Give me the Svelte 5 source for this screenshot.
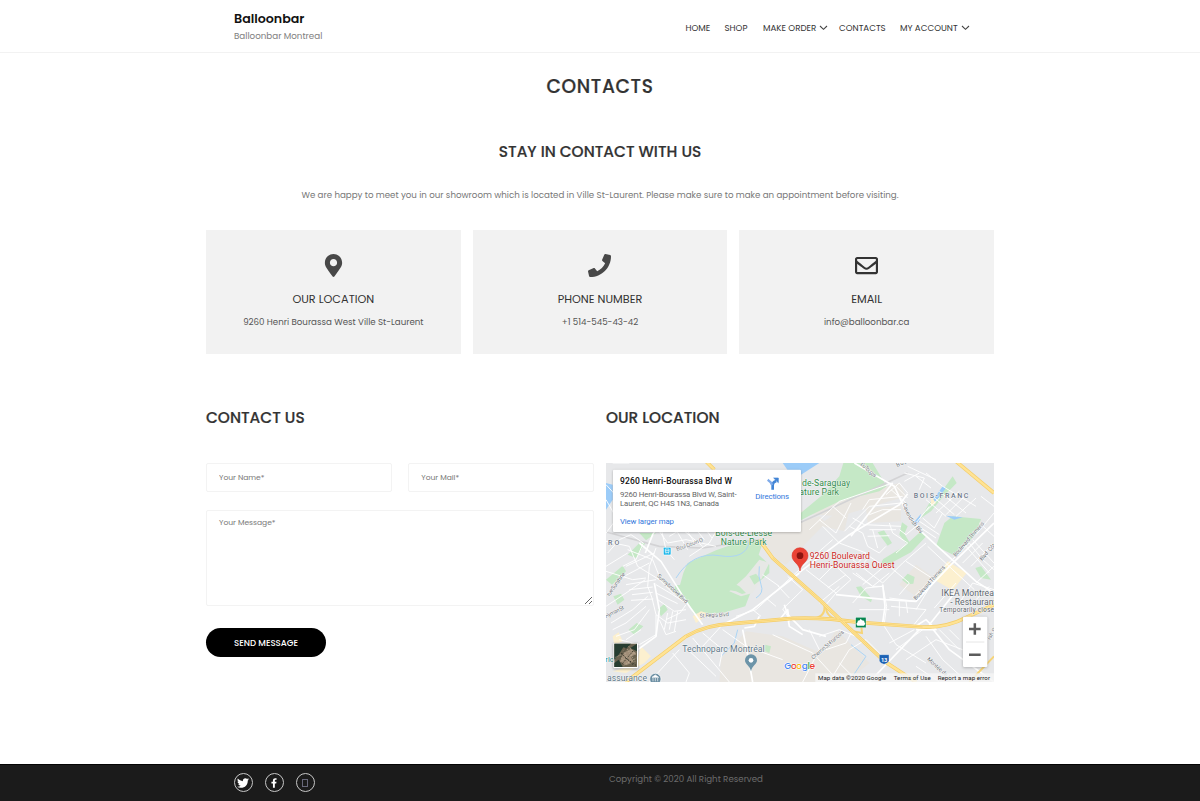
<script>
  const nav = [
    { label: 'HOME', w: 25 },
    { label: 'SHOP', w: 24 },
    { label: 'MAKE ORDER', w: 65, sub: true },
    { label: 'CONTACTS', w: 47 },
    { label: 'MY ACCOUNT', w: 70, sub: true }
  ];
  const cards = [
    { title: 'OUR LOCATION', text: '9260 Henri Bourassa West Ville St-Laurent', icon: 'pin' },
    { title: 'PHONE NUMBER', text: '+1 514-545-43-42', icon: 'phone' },
    { title: 'EMAIL', text: 'info@balloonbar.ca', icon: 'mail' }
  ];
  const twitter = 'M459.37 151.716c.325 4.548.325 9.097.325 13.645 0 138.72-105.583 298.558-298.558 298.558-59.452 0-114.68-17.219-161.137-47.106 8.447.974 16.568 1.299 25.34 1.299 49.055 0 94.213-16.568 130.274-44.832-46.132-.975-84.792-31.188-98.112-72.772 6.498.974 12.995 1.624 19.818 1.624 9.421 0 18.843-1.3 27.614-3.573-48.081-9.747-84.143-51.98-84.143-102.985v-1.299c13.969 7.797 30.214 12.67 47.431 13.319-28.264-18.843-46.781-51.005-46.781-87.391 0-19.492 5.197-37.36 14.294-52.954 51.655 63.675 129.3 105.258 216.365 109.807-1.624-7.797-2.599-15.918-2.599-24.04 0-57.828 46.782-104.934 104.934-104.934 30.213 0 57.502 12.67 76.67 33.137 23.715-4.548 46.456-13.32 66.599-25.34-7.798 24.366-24.366 44.833-46.132 57.827 21.117-2.273 41.584-8.122 60.426-16.243-14.292 20.791-32.161 39.308-52.628 54.253z';
  const facebook = 'M279.14 288l14.22-92.66h-88.91v-60.13c0-25.35 12.42-50.06 52.24-50.06h40.42V6.26S260.43 0 225.36 0c-73.22 0-121.08 44.38-121.08 124.72v70.62H22.89V288h81.39v224h100.17V288z';

  const parks = [
    'M545 183L650 95 700 40 712 0 800 0 842 70 820 85 700 115 610 158 585 172Z',
    'M245 300L330 262 420 230 470 240 458 275 490 305 490 330 440 372 418 430 350 450 262 452 250 425 203 388 208 366 222 366 232 330Z',
    'M990 250L1015 180 1040 160 1125 168 1112 210 1050 280Z',
    'M832 288L895 250 945 205 962 218 915 268 840 308 825 300Z',
    'M815 208L834 202 858 240 845 248Z',
    'M888 178L905 190 895 212 912 240 904 246 880 215Z',
    'M945 165L970 120 1000 95 1040 40 1052 60 1008 105 975 145Z',
    'M90 285L118 240 100 240 65 275Z', 'M0 350L50 308 60 325 18 365Z',
    'M22 400L45 392 55 410 35 425Z', 'M155 440L175 422 185 440 165 460Z',
    'M68 500L92 480 112 490 85 515Z', 'M750 372L765 370 798 408 795 418 765 400Z',
    'M888 350L905 332 926 342 922 362 905 364Z', 'M478 545L495 550 490 570 478 565Z',
    'M1108 315L1125 310 1155 350 1125 345Z', 'M215 145L245 132 265 145 238 170Z',
    'M100 210L150 210 120 232Z'
  ];
  const blocks = [
    'M470 205L585 175 640 160 655 175 735 120 715 205 650 190 600 240 540 305 485 270Z',
    'M780 135L885 128 885 175 785 180Z', 'M560 150L880 60 900 100 700 160Z',
    'M345 585L420 505 530 520 690 590 640 657 340 657Z',
    'M880 365L930 305 985 345 930 400Z', 'M690 500L790 600 720 657 610 640Z'
  ];
  const minor = [
    'M0 65L60 130 0 210', 'M0 110L40 180 95 205', 'M20 0L70 0', 'M0 235L70 250 95 310 160 350 205 395',
    'M5 270L40 230 75 215 112 240 90 290 50 310', 'M65 260L140 290 160 340', 'M60 310L145 270', 'M45 345L130 300',
    'M150 255L130 310 125 370 138 405 150 455 150 520', 'M0 430L60 390 118 350', 'M15 480L80 440 125 400',
    'M60 365L150 350', 'M70 380L140 372', 'M78 395L140 388', 'M75 412L142 408', 'M150 365L200 395 240 420', 'M150 390L215 422',
    'M155 410L205 445 240 440', 'M150 455L185 480 240 470', 'M160 470L180 515 210 505', 'M185 450L175 500', 'M200 445L190 500', 'M215 445L205 505',
    'M240 425L222 450 180 470', 'M120 430L60 480 20 500', 'M130 440L85 500 30 520', 'M150 515L100 545 40 530', 'M60 530L105 500',
    'M190 220L240 190 300 160', 'M150 190L230 200 290 250', 'M210 200L245 260', 'M235 190L270 245', 'M255 180L295 230', 'M275 165L318 225',
    'M155 150L180 260 205 290', 'M160 205L185 240 240 230 330 250', 'M330 205L310 240 250 280', 'M0 310L65 270', 'M0 325L80 350 120 345',
    'M390 460L450 440 580 320', 'M440 440L465 460', 'M480 405L510 430', 'M515 368L550 405', 'M545 340L590 380 530 438 545 460', 'M470 335L520 370',
    'M590 310L640 265 680 230', 'M600 320L690 390 660 425', 'M640 350L680 310', 'M665 375L720 335', 'M690 390L735 350 690 310',
    'M640 420L700 370', 'M650 190L700 240 780 270 740 320', 'M610 200L700 115 860 60', 'M640 170L690 210 735 120', 'M680 130L720 165', 'M715 205L790 130 885 120',
    'M740 165L775 185 885 190', 'M730 190L770 210 785 250 820 270 840 250', 'M790 200L870 200', 'M785 220L850 218', 'M800 200L815 255', 'M850 180L860 210 905 240 870 270',
    'M880 200L900 215 930 190', 'M770 140L790 110 890 100', 'M790 155L830 140 885 140', 'M855 80L900 120', 'M870 70L905 105', 'M840 95L880 60 905 90',
    'M740 290L830 360', 'M765 310L790 280 835 310 770 365', 'M750 330L800 370 850 330', 'M830 360L890 300 960 240', 'M850 310L910 360 880 395', 'M900 295L985 350',
    'M920 405L990 335 1060 270', 'M965 250L1040 320 1105 380', 'M1040 290L1090 240 1130 290 1164 320', 'M1110 215L1164 150', 'M1100 230L1164 300', 'M1080 250L1150 330', 'M1120 180L1164 220',
    'M1070 300L1130 240', 'M1095 310L1164 240', 'M1110 360L1164 310', 'M985 350L930 440', 'M1050 360L985 435',
    'M960 110L1020 160', 'M980 100L1045 155', 'M1000 85L1080 150', 'M1010 70L1110 130', 'M960 145L1010 95', 'M990 150L1060 85', 'M1020 155L1080 95', 'M1050 160L1110 105', 'M950 165L985 195 1010 150',
    'M940 175L1000 215', 'M945 195L990 225', 'M970 130L930 180', 'M1125 100L1164 130', 'M830 365L842 430 835 480', 'M850 405L930 415', 'M855 430L960 440 920 490', 'M880 415L880 460', 'M900 415L905 450',
    'M740 420L780 375 830 370', 'M760 440L850 440', 'M740 330L800 370 830 370', 'M610 500L640 560 590 657', 'M500 515L620 570 700 657', 'M230 545L330 640', 'M260 525L370 657', 'M290 510L350 560 340 610',
    'M350 500L420 550 530 590', 'M200 570L250 630 240 657', 'M220 560L130 657', 'M345 490L290 550', 'M680 640L730 560 780 530 840 590', 'M700 600L750 650', 'M660 560L720 540 740 500', 'M640 520L700 500 750 520',
    'M835 490L870 545 960 600', 'M850 540L925 500', 'M870 560L950 500', 'M900 590L990 530 1070 560', 'M930 610L1000 657', 'M1000 500L1060 560', 'M1030 500L1060 530', 'M960 520L1010 590 1065 640', 'M1060 420L1100 360 1164 380', 'M1110 410L1150 370',
    'M895 30L955 45 940 80', 'M930 40L975 75', 'M960 30L1010 70', 'M895 55L940 30', 'M905 10L990 50'
  ];
  const major = [
    'M100 240L165 295 250 430 290 485', 'M118 270L140 215 180 150 215 140', 'M145 360L160 440 150 520 40 600',
    'M340 490L440 440 580 330', 'M580 328L730 215 880 125 905 92', 'M745 0L865 70 900 145 945 205 1110 355 1164 390',
    'M690 395L840 410 930 415 1030 310 1164 180', 'M735 220L860 60', 'M940 500L790 657', 'M970 485L1050 385',
    'M970 485L1030 560 1164 657', 'M410 500L430 600 440 657', 'M545 460L550 490 590 515', 'M520 470L545 440 550 475', 'M925 492L960 470 990 500 930 500', 'M460 460L445 490 415 495',
    'M535 425L545 455 590 500 660 520', 'M830 365L837 430 830 480'
  ];
  const highways = [
    'M300 -5L325 20', 'M460 230L500 285 640 410 740 505 835 595 930 657',
    'M60 657L240 520Q300 485 380 482L560 466Q650 462 760 478L950 492Q1020 495 1080 464L1164 425',
    'M1050 -5L1164 90'
  ];
  const ramps = ['M660 430Q658 465 710 475L760 478', 'M625 466Q660 460 655 425', 'M765 480L768 510 740 505', 'M1090 657L1164 580'];
</script>

<header>
  <div class="wrap bar">
    <div class="brand">
      <strong>Balloonbar</strong>
      <span>Balloonbar Montreal</span>
    </div>
    <nav>
      {#each nav as n}
        <a href="#top" style="width:{n.w}px">{n.label}
          {#if n.sub}<svg width="9" height="6" viewBox="0 0 9 6"><path d="M1 1l3.5 3.3L8 1" fill="none" stroke="#444" stroke-width="1.1" /></svg>{/if}
        </a>
      {/each}
    </nav>
  </div>
</header>

<main>
  <h1>CONTACTS</h1>
  <h2 class="stay">STAY IN CONTACT WITH US</h2>
  <p class="intro">We are happy to meet you in our showroom which is located in Ville St-Laurent. Please make sure to make an appointment before visiting.</p>

  <section class="cards">
    {#each cards as c}
      <article>
        {#if c.icon === 'pin'}
          <svg width="23" height="23" viewBox="-64 0 512 512"><path fill="#484848" d="M172.268 501.67C26.97 291.031 0 269.413 0 192 0 85.961 85.961 0 192 0s192 85.961 192 192c0 77.413-26.97 99.031-172.268 309.67-9.535 13.774-29.93 13.773-39.464 0zM192 272c44.183 0 80-35.817 80-80s-35.817-80-80-80-80 35.817-80 80 35.817 80 80 80z" /></svg>
        {:else if c.icon === 'phone'}
          <svg width="23" height="23" viewBox="0 0 512 512"><path fill="#484848" d="M493.4 24.6l-104-24c-11.3-2.6-22.9 3.3-27.5 13.9l-48 112c-4.2 9.8-1.4 21.3 6.9 28l60.6 49.6c-36 76.7-98.9 140.5-177.2 177.2l-49.6-60.6c-6.8-8.3-18.2-11.1-28-6.9l-112 48C3.9 366.5-2 378.1.6 389.4l24 104C27.1 504.2 36.7 512 48 512c256.1 0 464-207.5 464-464 0-11.2-7.7-20.9-18.6-23.4z" /></svg>
        {:else}
          <svg width="23" height="23" viewBox="0 0 512 512"><path fill="#333" d="M464 64H48C21.49 64 0 85.49 0 112v288c0 26.51 21.49 48 48 48h416c26.51 0 48-21.49 48-48V112c0-26.51-21.49-48-48-48zm0 48v40.805c-22.422 18.259-58.168 46.651-134.587 106.49-16.841 13.247-50.201 45.072-73.413 44.701-23.208.375-56.579-31.459-73.413-44.701C106.18 199.465 70.425 171.067 48 152.805V112h416zM48 400V214.398c22.914 18.251 55.409 43.862 104.938 82.646 21.857 17.205 60.134 55.186 103.062 54.955 42.717.231 80.509-37.199 103.053-54.947 49.528-38.783 82.032-64.401 104.947-82.653V400H48z" /></svg>
        {/if}
        <h3>{c.title}</h3>
        <p>{c.text}</p>
      </article>
    {/each}
  </section>

  <section class="columns">
    <div>
      <h2>CONTACT US</h2>
      <form>
        <div class="fields">
          <input placeholder="Your Name*" />
          <input placeholder="Your Mail*" />
        </div>
        <textarea placeholder="Your Message*"></textarea>
        <button type="button">SEND MESSAGE</button>
      </form>
    </div>
    <div>
      <h2>OUR LOCATION</h2>
      <div class="map">
        <svg width="388" height="219" viewBox="0 0 1164 657">
          <rect width="1164" height="657" fill="#e7e8ea" />
          <g fill="#e9e6e1">{#each blocks as d}<path {d} />{/each}</g>
          <g fill="#c5e8c6">{#each parks as d}<path {d} />{/each}</g>
          <path d="M370 385L420 340 460 290 490 300 465 350 440 390 405 400Z" fill="#e7e8e6" />
          <path d="M372 382L385 362 400 370 420 390 408 393 390 385ZM430 340L450 332 465 350 445 365Z" fill="#c5e8c6" />
          <g fill="#9cccf8">
            <path d="M530 0H640L585 35 545 22Z" /><path d="M0 60L20 65V110L0 140Z" />
            <path d="M1020 158L1070 163 1045 170ZM918 185L945 152 940 175 925 188ZM975 120L1010 70 1020 75 990 115Z" />
          </g>
          <g fill="none" stroke="#acd5f5" stroke-width="3">
            <path d="M210 345Q260 265 340 278T430 235M460 310Q455 340 465 365T450 405M395 500L385 540 345 580M735 545L780 580 740 640" />
          </g>
          <g fill="#fcf0cf"><path d="M985 350L1025 295 1082 330 1040 382Z" /><path d="M105 550L135 580 115 600 60 630 20 625 90 605ZM20 520L38 508 50 535 25 545ZM260 460L285 445 310 452 270 480Z" /><path d="M975 100L990 120 975 130Z" /></g>
          <path d="M0 207L160 250 290 255 460 230M585 178L905 30" fill="none" stroke="#d3d3d5" stroke-width="5" />
          <g fill="none" stroke="#fff" stroke-width="2.8" stroke-linejoin="round">{#each minor as d}<path {d} />{/each}</g>
          <g fill="none" stroke="#fff" stroke-width="5" stroke-linejoin="round">{#each major as d}<path {d} />{/each}</g>
          <g fill="none" stroke="#f6d478" stroke-width="6">{#each ramps as d}<path {d} />{/each}</g>
          <g fill="none" stroke="#f4cd68" stroke-width="11">{#each highways as d}<path {d} />{/each}</g>
          <g fill="none" stroke="#ffe394" stroke-width="7">{#each highways as d}<path {d} />{/each}</g>
          <path d="M500 285L640 410 740 505 835 595M240 520Q300 485 380 482L560 466Q650 462 760 478L950 492" fill="none" stroke="#efc75e" stroke-width="1.5" />

          <g class="road">
            <text transform="translate(213 264) rotate(-20)" textLength="84">Boul Gouin O</text>
            <text transform="translate(152 340) rotate(43)" textLength="120">Sunnybrooke Blvd</text>
            <text transform="translate(10 400) rotate(-54)" textLength="82">rue Sunshine</text>
            <text transform="translate(0 466) rotate(-27)" textLength="62">Hyman St</text>
            <text transform="translate(281 464) rotate(-3)" textLength="88">St Regis Blvd</text>
            <text transform="translate(762 5) rotate(42)" textLength="58">Du Tougas</text>
            <text transform="translate(873 12) rotate(-22)" textLength="40">Boul</text>
            <path id="cav" d="M890 122Q900 165 943 212" fill="none" stroke="none" /><text><textPath href="#cav">Cavendish Blvd</textPath></text>
            <text transform="translate(1049 282) rotate(-49)" textLength="132">Boulevard Thimens</text>
            <text transform="translate(930 412) rotate(-48)" textLength="132">Boulevard Thimens</text>
            <text transform="translate(1128 294) rotate(-48)" textLength="70">Blvd. Côte</text>
            <text transform="translate(622 590) rotate(-41)" textLength="124">Chemin St-François</text>
            <text transform="translate(962 590) rotate(42)" textLength="90">Montée de L</text>
            <text transform="translate(1152 531) rotate(-58)">ish St</text>
          </g>

          <g class="place">
            <text class="park" x="588" y="70" textLength="144">de-Saraguay</text>
            <text class="park" x="580" y="96" textLength="119">ature Park</text>
            <text class="park" x="328" y="219" textLength="170">Bois-de-Liesse</text>
            <text class="park" x="344" y="245" textLength="138">Nature Park</text>
            <text class="area" x="923" y="105" textLength="164">BOIS-FRANC</text>
            <text class="area" x="6" y="247" textLength="34">RO</text>
            <text class="red" x="611" y="288" textLength="181">9260 Boulevard</text>
            <text class="red" x="611" y="314" textLength="255">Henri-Bourassa Ouest</text>
            <text class="slate" x="1006" y="400" textLength="164">IKEA Montreal</text>
            <text class="slate" x="1033" y="426" textLength="138">- Restaurant</text>
            <text class="slate small" x="1000" y="447" textLength="176">Temporarily closed</text>
            <text class="poi" x="229" y="566" textLength="247">Technoparc Montréal</text>
            <text class="poi" x="3" y="653" textLength="120">assurance</text>
            <text class="teal" x="-2" y="598">rlo</text>
          </g>

          <path d="M582 324C580 300 558 298 558 278A24 24 0 0 1 606 278C606 298 584 300 582 324Z" fill="#ea4335" stroke="#d93025" stroke-width="1.5" />
          <circle cx="582" cy="278" r="10" fill="#8c1510" />
          <path d="M435 625C431 607 417 604 417 592A18 18 0 0 1 453 592C453 604 439 607 435 625Z" fill="#6c94a8" /><circle cx="435" cy="592" r="7" fill="#fff" />
          <circle cx="148" cy="648" r="17" fill="#6c8fa3" stroke="#fff" stroke-width="2" />
          <path d="M138 643L148 636 158 643ZM141 645V655M148 645V655M155 645V655" stroke="#fff" stroke-width="2" fill="#fff" />
          <rect x="172" y="253" width="23" height="23" rx="3" fill="#19b6ea" stroke="#fff" stroke-width="2" />
          <path d="M178 258H189V268H178ZM178 263H189M180 268V272M187 268V272" fill="none" stroke="#fff" stroke-width="2" />
          <rect x="749" y="463" width="31" height="31" fill="#078650" stroke="#fff" stroke-width="1" />
          <path d="M764 467L768 472 775 473 775 477 778 482 774 488H754L751 482 755 477V473L761 472Z" fill="#fff" />
          <path d="M820 575H849V594Q845 602 834 604 823 602 820 594Z" fill="#1c62b5" stroke="#fff" stroke-width="1" /><text x="825" y="596" class="shield" textLength="19">13</text>

          <rect x="22" y="540" width="74" height="76" rx="3" fill="#fff" filter="drop-shadow(0 2px 3px #0006)" />
          <rect x="25" y="542" width="68" height="70" fill="#6b6350" />
          <path d="M25 542H75L62 556 52 553 38 575 25 590ZM25 600L38 590 50 612H25ZM73 555L93 542V565Z" fill="#263d31" />
          <path d="M52 570L75 557 91 572 75 582 83 598 60 607 42 595Z" fill="#a18e78" />
          <path d="M28 583L45 575 49 592M54 563L69 602M64 558L87 596M43 595L88 568M53 607L91 585M68 550L90 577" fill="none" stroke="#c2b39c" stroke-width="2" stroke-dasharray="4 3" />
          <path d="M45 570L83 607M49 602L82 563M61 555L42 586M57 584L90 607" fill="none" stroke="#403f32" stroke-width="3" stroke-dasharray="5 4" />

          <text class="google" x="535" y="618" textLength="92"><tspan fill="#4285f4">G</tspan><tspan fill="#ea4335">o</tspan><tspan fill="#fbbc04">o</tspan><tspan fill="#4285f4">g</tspan><tspan fill="#34a853">l</tspan><tspan fill="#ea4335">e</tspan></text>
          <rect x="628" y="631" width="536" height="26" fill="#f5f5f5" opacity=".82" />
          <g class="legal"><text x="636" y="650" textLength="205">Map data ©2020 Google</text><text x="863" y="650" textLength="111">Terms of Use</text><text x="995" y="650" textLength="157">Report a map error</text></g>

          <rect x="1071" y="461" width="73" height="151" rx="4" fill="#fff" filter="drop-shadow(0 2px 4px #0004)" />
          <path d="M1080 537H1135" stroke="#e6e6e6" stroke-width="3" />
          <path d="M1089 498H1124M1106.500 480.500V515.500M1089 575H1124" stroke="#5c5c5c" stroke-width="7.5" />

          <rect x="21" y="20" width="564" height="187" rx="3" fill="#fff" filter="drop-shadow(0 2px 3px #0004)" />
          <g class="info">
            <text x="42" y="62" class="title" textLength="336">9260 Henri-Bourassa Blvd W</text>
            <text x="42" y="102" textLength="350">9260 Henri-Bourassa Blvd W, Saint-</text>
            <text x="42" y="128" textLength="297">Laurent, QC H4S 1N3, Canada</text>
            <text x="42" y="183" class="link" textLength="162">View larger map</text>
            <text x="448" y="109" class="link" textLength="101">Directions</text>
          </g>
          <path d="M500 80V66Q500 57 511 54" fill="none" stroke="#4285d6" stroke-width="8" /><path d="M503 45H517V59Z" fill="#4285d6" stroke="#4285d6" stroke-width="2" /><path d="M498 66Q496 57 485 50" fill="none" stroke="#7fabea" stroke-width="7" />
        </svg>
      </div>
    </div>
  </section>
</main>

<footer>
  <div class="wrap foot">
    <div class="social">
      <a href="#top" aria-label="Twitter"><svg width="12" height="12" viewBox="0 0 512 512"><path fill="#fff" d={twitter} /></svg></a>
      <a href="#top" aria-label="Facebook"><svg width="6" height="10" viewBox="0 0 320 512"><path fill="#fff" d={facebook} /></svg></a>
      <a href="#top" aria-label="Instagram"><svg width="6" height="8" viewBox="0 0 6 8"><rect x=".5" y=".5" width="5" height="7" fill="none" stroke="#68687a" /></svg></a>
    </div>
    <p>Copyright © 2020 All Right Reserved</p>
  </div>
</footer>

<style>
  :global(body) { background: #fff; font-family: Poppins, Inter, sans-serif; color: #333; }
  h1, h2, h3, p { margin: 0; font-weight: 400; white-space: nowrap; }
  a { color: inherit; text-decoration: none; }
  svg { display: block; }
  header { height: 52px; border-bottom: 1px solid #f2f2f2; }
  .wrap { width: 732px; margin: 0 auto; }
  .bar { display: flex; justify-content: space-between; align-items: flex-start; }
  .brand { display: flex; flex-direction: column; padding-top: 10px; }
  .brand strong { font-size: 12.650px; line-height: 17px; font-weight: 600; color: #111; }
  .brand span { font-size: 8.740px; line-height: 18px; color: #808080; }
  nav { display: flex; gap: 14px; width: 280.500px; margin-top: 20px; font-size: 8.700px; line-height: 16px; color: #333; }
  nav a { display: flex; align-items: center; justify-content: space-between; flex: none; white-space: nowrap; }
  nav a:nth-child(3) { margin-right: -3px; }
  nav a:nth-child(2) { margin-right: .500px; }
  main { width: 788px; margin: 0 auto; height: 711px; }
  h1 { text-align: center; padding-top: 19px; font-size: 18.600px; line-height: 30px; font-weight: 500; letter-spacing: .65px; -webkit-text-stroke: .2px #333; }
  h2 { font-size: 15.350px; line-height: 24px; font-weight: 500; -webkit-text-stroke: .2px #333; }
  .stay { text-align: center; margin-top: 38px; }
  .intro { text-align: center; margin-top: 23px; font-size: 8.690px; line-height: 16px; color: #777; }
  .cards { display: grid; grid-template-columns: repeat(3, 1fr); gap: 12px; margin-top: 27px; }
  article { height: 124px; padding-top: 24px; background: #f2f2f2; display: flex; flex-direction: column; align-items: center; box-sizing: border-box; }
  h3 { font-size: 11.250px; line-height: 16px; margin-top: 14px; color: #333; }
  article p { font-size: 8.680px; line-height: 16px; margin-top: 7px; color: #555; }
  .columns { display: grid; grid-template-columns: 388px 388px; gap: 12px; margin-top: 52px; }
  form { margin-top: 33px; }
  .fields { display: flex; gap: 16.500px; }
  input, textarea { box-sizing: border-box; border: 1px solid #f3f3f3; border-radius: 2px; padding: 0 12px; font: 7.550px Poppins, Inter, sans-serif; outline: none; }
  input { width: 185.750px; height: 29px; }
  ::placeholder { color: #777; opacity: 1; }
  textarea { display: block; width: 388px; height: 96px; margin-top: 18px; padding-top: 6px; }
  button { display: block; width: 120px; height: 29px; margin-top: 22px; padding: 2px 0 0; border: 0; border-radius: 15px; background: #000; color: #fff; font: 500 8.650px Poppins, Inter, sans-serif; }
  .map { margin-top: 33px; overflow: hidden; }
  .map text { font-family: Roboto, sans-serif; }
  .road text { font-size: 17px; fill: #6c7075; stroke: #fff; stroke-width: 2; paint-order: stroke; }
  .place text { font-size: 26px; stroke: #fff; stroke-width: 2; paint-order: stroke; }
  .place .park { fill: #2f8a49; }
  .place .area { font-size: 21px; font-weight: 500; fill: #6c7789; }
  .place .red { fill: #c9231a; }
  .place .slate { fill: #5c656d; }
  .place .small { font-size: 20px; }
  .place .poi { fill: #5d7687; }
  .place .teal { font-size: 23px; fill: #258b8b; }
  .map .shield { font-size: 17px; font-weight: 700; fill: #fff; }
  .map .google { font-family: Poppins, sans-serif; font-size: 27px; font-weight: 500; stroke: #fff; stroke-width: 3; paint-order: stroke; }
  .legal text { font-size: 18.500px; fill: #222; }
  .info text { font-size: 23.500px; fill: #666; }
  .info .title { font-size: 25.500px; font-weight: 500; fill: #111; }
  .info .link { fill: #3378dc; }
  footer { height: 37px; background: #1b1b1b; border-top: 1px solid #050505; box-sizing: border-box; }
  .foot { display: flex; }
  .social { display: flex; gap: 12px; width: 375px; padding-top: 8px; }
  .social a { width: 19.300px; height: 19.300px; margin-left: -.3px; box-sizing: border-box; border: 1px solid #c6c6c6; border-radius: 50%; display: grid; place-items: center; }
  .foot p { margin-top: 6px; font-size: 8.670px; line-height: 17px; color: #6c6c6c; }
</style>
